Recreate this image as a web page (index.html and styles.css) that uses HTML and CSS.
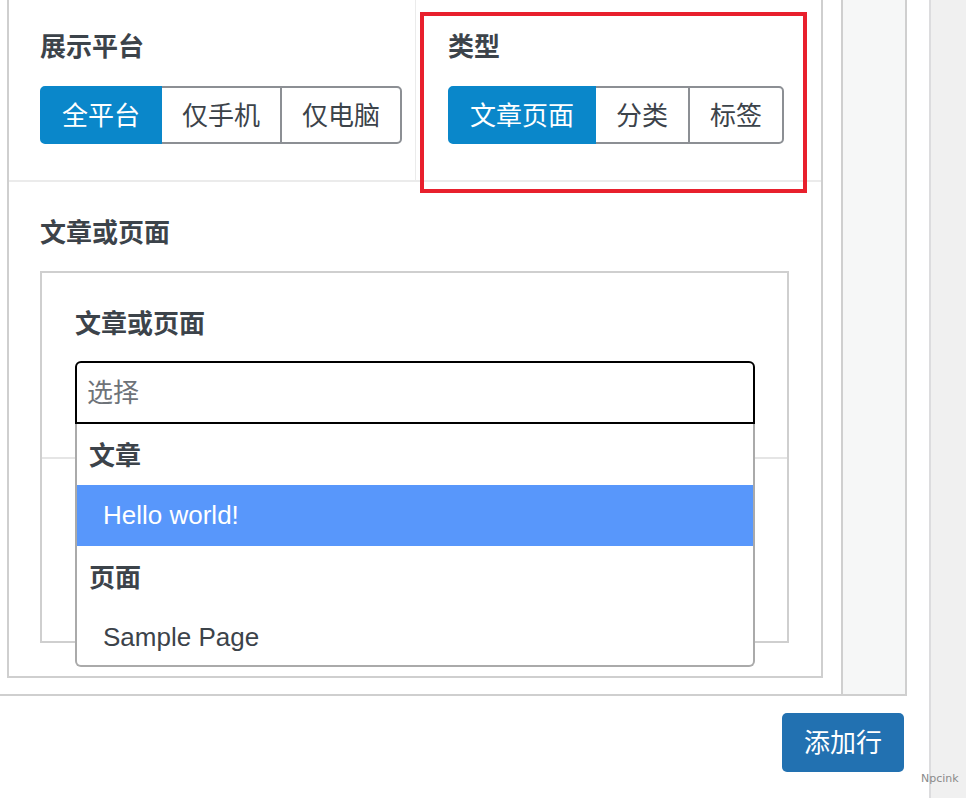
FILE: index.html
```html
<!DOCTYPE html>
<html lang="zh">
<head>
<meta charset="utf-8">
<title>文章或页面</title>
<link rel="stylesheet" href="styles.css">
</head>
<body>
<div class="main">
  <div class="frame">
    <div class="content">
      <div class="box">
        <div class="top-row">
          <div class="cell cell-left">
            <div class="label">展示平台</div>
            <div class="btn-group">
              <span class="seg active">全平台</span>
              <span class="seg">仅手机</span>
              <span class="seg">仅电脑</span>
            </div>
          </div>
          <div class="cell cell-right">
            <div class="label">类型</div>
            <div class="btn-group">
              <span class="seg active">文章页面</span>
              <span class="seg">分类</span>
              <span class="seg">标签</span>
            </div>
          </div>
        </div>
        <div class="section">
          <div class="label">文章或页面</div>
          <div class="inner-box">
            <div class="field">
              <div class="label">文章或页面</div>
              <div class="select-wrap">
                <div class="select">选择</div>
                <div class="dropdown">
                  <div class="opt-group">文章</div>
                  <div class="opt highlighted">Hello world!</div>
                  <div class="opt-group">页面</div>
                  <div class="opt">Sample Page</div>
                </div>
              </div>
            </div>
            <div class="field-rest"></div>
          </div>
        </div>
      </div>
    </div>
    <div class="side"></div>
  </div>
  <div class="actions">
    <span class="btn-primary">添加行</span>
  </div>
  <div class="annotation"></div>
</div>
<div class="rail"></div>
<div class="watermark">Npcink</div>
</body>
</html>
```

FILE: styles.css
```css
html, body {
  margin: 0;
  padding: 0;
}
body {
  display: flex;
  width: 966px;
  height: 798px;
  overflow: hidden;
  background: #ffffff;
  font-family: "Liberation Sans", "Noto Sans CJK SC", sans-serif;
  font-size: 26px;
  line-height: 34px;
  color: #3c434a;
  position: relative;
}
.main {
  width: 929px;
  position: relative;
}
.frame {
  width: 907px;
  height: 696px;
  box-sizing: border-box;
  border-right: 2px solid #cfcfcf;
  border-bottom: 2px solid #cfcfcf;
  display: flex;
}
.content {
  width: 841px;
}
.box {
  margin-left: 7px;
  width: 816px;
  height: 678px;
  box-sizing: border-box;
  border: 2px solid #cfcfcf;
  border-top: none;
  display: flex;
  flex-direction: column;
}
.side {
  flex: 1;
  background: #f6f7f7;
  border-left: 2px solid #cfcfcf;
}
.top-row {
  display: flex;
  height: 180px;
  border-bottom: 2px solid #ebebeb;
}
.cell {
  padding-top: 30px;
  box-sizing: border-box;
}
.cell-left {
  width: 407px;
  padding-left: 31px;
  border-right: 1px solid #ebebeb;
}
.cell-right {
  flex: 1;
  padding-left: 32px;
}
.label {
  font-weight: 700;
  color: #3c434a;
}
.btn-group {
  display: inline-flex;
  margin-top: 22px;
}
.seg {
  display: block;
  padding: 11px 20px 9px;
  border: 2px solid #8c8f94;
  margin-left: -2px;
  background: #ffffff;
  color: #3c434a;
}
.seg:first-child {
  margin-left: 0;
  border-radius: 5px 0 0 5px;
}
.seg:last-child {
  border-radius: 0 5px 5px 0;
}
.seg.active {
  background: #0a87ca;
  border-color: #0a87ca;
  color: #ffffff;
  position: relative;
}
.section {
  flex: 1;
  padding: 34px 32px 0 31px;
}
.inner-box {
  margin-top: 21px;
  height: 372px;
  box-sizing: border-box;
  border: 2px solid #cfcfcf;
  display: flex;
  flex-direction: column;
}
.field {
  padding: 34px 32px 33px 33px;
}
.field .label {
  font-weight: 700;
}
.select-wrap {
  position: relative;
  margin-top: 20px;
}
.select {
  height: 63px;
  box-sizing: border-box;
  border: 2px solid #000000;
  border-radius: 6px 6px 0 0;
  padding: 13px 10px 12px;
  color: #6e7379;
}
.dropdown {
  position: absolute;
  top: 100%;
  left: 0;
  right: 0;
  background: #ffffff;
  border: 2px solid #aaaaaa;
  border-top: none;
  border-radius: 0 0 6px 6px;
  z-index: 2;
}
.opt-group {
  height: 61px;
  box-sizing: border-box;
  padding: 15px 12px 12px;
  font-weight: 700;
}
.opt {
  height: 61px;
  box-sizing: border-box;
  padding: 13px 26px 14px;
}
.opt:last-child {
  height: 58px;
}
.opt.highlighted {
  background: #5897fb;
  color: #ffffff;
}
.field-rest {
  flex: 1;
  border-top: 2px solid #e5e5e5;
}
.actions {
  display: flex;
  justify-content: flex-end;
  padding-right: 25px;
  margin-top: 17px;
}
.btn-primary {
  display: block;
  width: 122px;
  height: 59px;
  box-sizing: border-box;
  padding: 13px 0 12px;
  text-align: center;
  background: #2271b1;
  color: #ffffff;
  border-radius: 5px;
}
.annotation {
  position: absolute;
  left: 420px;
  top: 12px;
  width: 387px;
  height: 181px;
  box-sizing: border-box;
  border: 4px solid #e8202d;
  pointer-events: none;
}
.rail {
  flex: 1;
  background: #f0f0f0;
  border-left: 2px solid #dcdcde;
}
.watermark {
  position: absolute;
  left: 921px;
  top: 772px;
  font-size: 11px;
  line-height: 14px;
  color: #8a8a8a;
  font-family: "DejaVu Sans", sans-serif;
}
```
